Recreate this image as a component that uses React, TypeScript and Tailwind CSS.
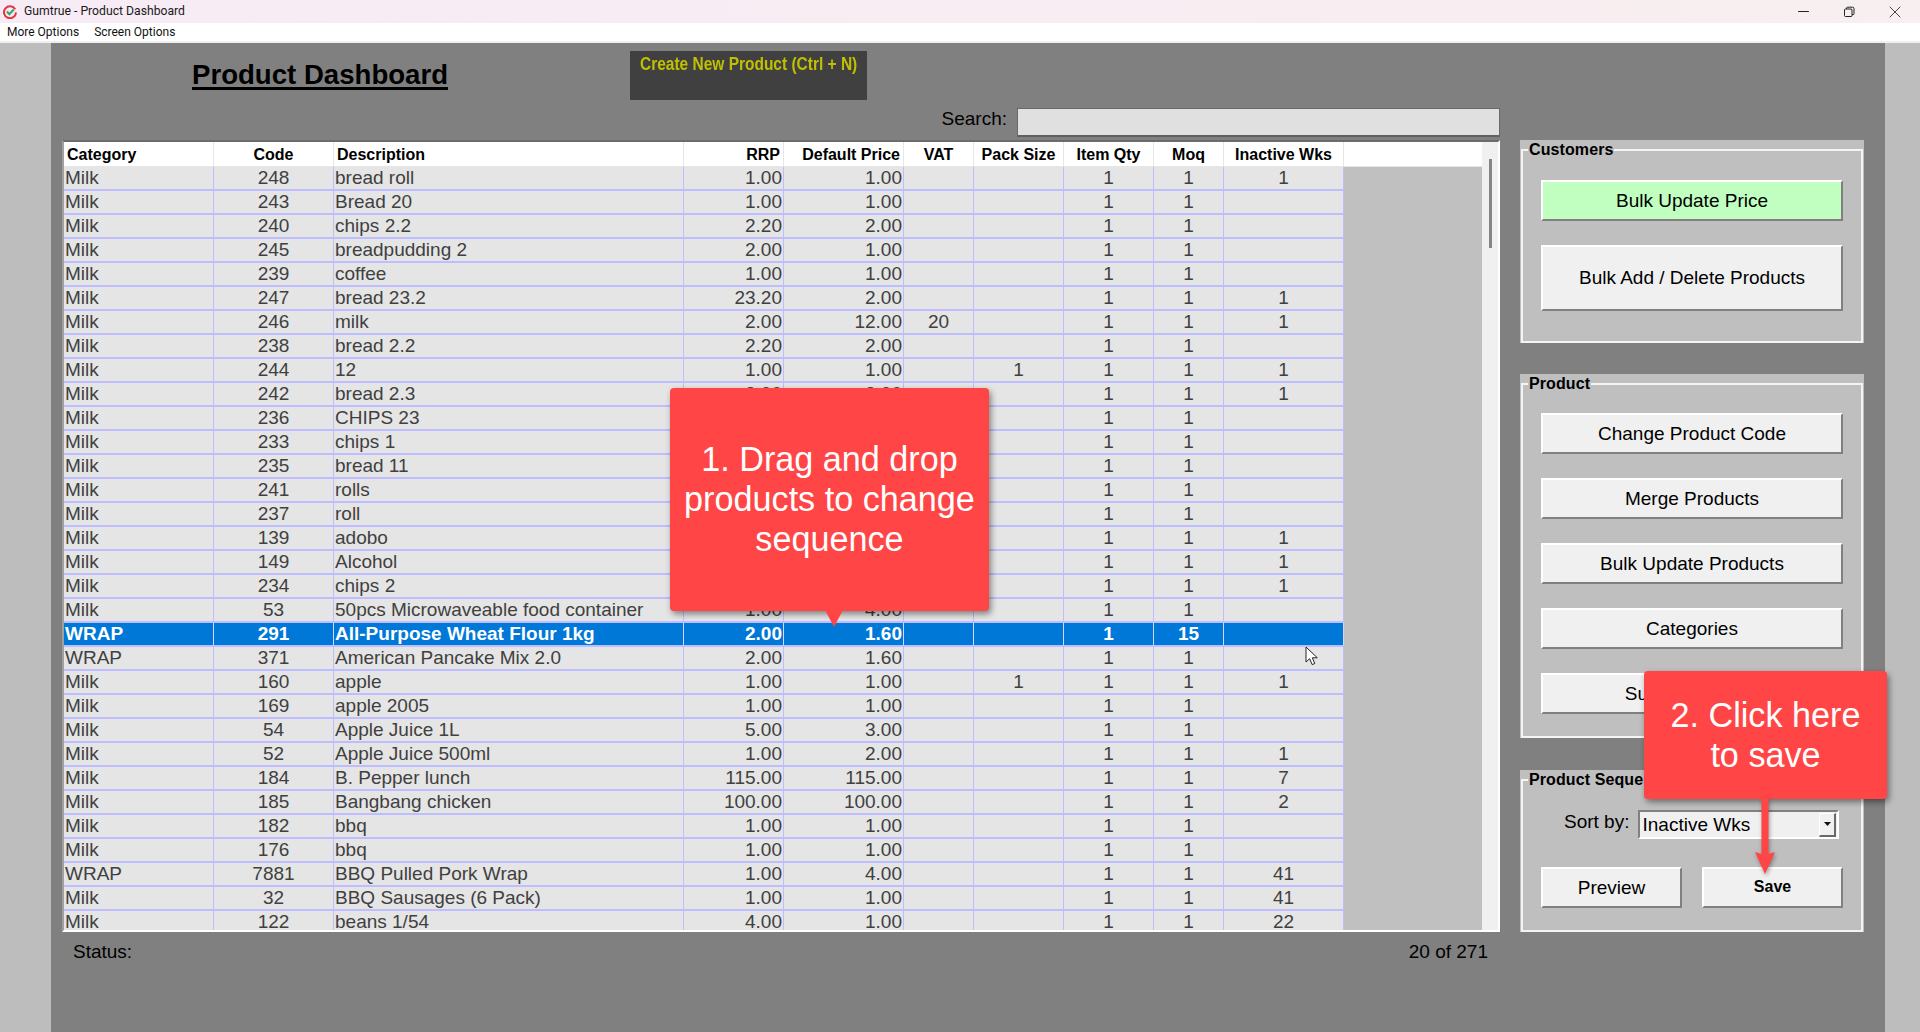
import { Minus, X } from "lucide-react";

type Row = [string, string, string, string, string, string, string, string, string, string];

const rows: Row[] = [
  ["Milk", "248", "bread roll", "1.00", "1.00", "", "", "1", "1", "1"],
  ["Milk", "243", "Bread 20", "1.00", "1.00", "", "", "1", "1", ""],
  ["Milk", "240", "chips 2.2", "2.20", "2.00", "", "", "1", "1", ""],
  ["Milk", "245", "breadpudding 2", "2.00", "1.00", "", "", "1", "1", ""],
  ["Milk", "239", "coffee", "1.00", "1.00", "", "", "1", "1", ""],
  ["Milk", "247", "bread 23.2", "23.20", "2.00", "", "", "1", "1", "1"],
  ["Milk", "246", "milk", "2.00", "12.00", "20", "", "1", "1", "1"],
  ["Milk", "238", "bread 2.2", "2.20", "2.00", "", "", "1", "1", ""],
  ["Milk", "244", "12", "1.00", "1.00", "", "1", "1", "1", "1"],
  ["Milk", "242", "bread 2.3", "2.00", "2.00", "", "", "1", "1", "1"],
  ["Milk", "236", "CHIPS 23", "", "", "", "", "1", "1", ""],
  ["Milk", "233", "chips 1", "", "", "", "", "1", "1", ""],
  ["Milk", "235", "bread 11", "", "", "", "", "1", "1", ""],
  ["Milk", "241", "rolls", "", "", "", "", "1", "1", ""],
  ["Milk", "237", "roll", "", "", "", "", "1", "1", ""],
  ["Milk", "139", "adobo", "", "", "", "", "1", "1", "1"],
  ["Milk", "149", "Alcohol", "", "", "", "", "1", "1", "1"],
  ["Milk", "234", "chips 2", "", "", "", "", "1", "1", "1"],
  ["Milk", "53", "50pcs Microwaveable food container", "1.00", "4.00", "", "", "1", "1", ""],
  ["WRAP", "291", "All-Purpose Wheat Flour 1kg", "2.00", "1.60", "", "", "1", "15", ""],
  ["WRAP", "371", "American Pancake Mix 2.0", "2.00", "1.60", "", "", "1", "1", ""],
  ["Milk", "160", "apple", "1.00", "1.00", "", "1", "1", "1", "1"],
  ["Milk", "169", "apple 2005", "1.00", "1.00", "", "", "1", "1", ""],
  ["Milk", "54", "Apple Juice 1L", "5.00", "3.00", "", "", "1", "1", ""],
  ["Milk", "52", "Apple Juice 500ml", "1.00", "2.00", "", "", "1", "1", "1"],
  ["Milk", "184", "B. Pepper lunch", "115.00", "115.00", "", "", "1", "1", "7"],
  ["Milk", "185", "Bangbang chicken", "100.00", "100.00", "", "", "1", "1", "2"],
  ["Milk", "182", "bbq", "1.00", "1.00", "", "", "1", "1", ""],
  ["Milk", "176", "bbq", "1.00", "1.00", "", "", "1", "1", ""],
  ["WRAP", "7881", "BBQ Pulled Pork Wrap", "1.00", "4.00", "", "", "1", "1", "41"],
  ["Milk", "32", "BBQ Sausages (6 Pack)", "1.00", "1.00", "", "", "1", "1", "41"],
  ["Milk", "122", "beans 1/54", "4.00", "1.00", "", "", "1", "1", "22"],
];

const headers = ["Category", "Code", "Description", "RRP", "Default Price", "VAT", "Pack Size", "Item Qty", "Moq", "Inactive Wks"];

const colWidths = ["w-[150px]", "w-[120px]", "w-[350px]", "w-[100px]", "w-[120px]", "w-[70px]", "w-[90px]", "w-[90px]", "w-[70px]", "w-[120px]"];

const headAlign = ["pl-[3px] text-left", "text-center", "pl-[3px] text-left", "pr-[3px] text-right", "pr-[3px] text-right", "text-center", "text-center", "text-center", "text-center", "text-center"];

const cellAlign = ["pl-[1px] text-left", "text-center", "pl-[1px] text-left", "pr-[1px] text-right", "pr-[1px] text-right", "text-center", "text-center", "text-center", "text-center", "text-center"];

const WinButton = ({ label, className = "" }: { label: string; className?: string }) => (
  <button className={`h-[41px] w-[302px] border-t-2 border-l-2 border-r-2 border-b-2 border-t-white border-l-white border-r-[#808080] border-b-[#808080] bg-[#f0f0f0] pt-[2px] text-[19px] text-black ${className}`}>
    {label}
  </button>
);

const GroupBox = ({ title, className, children }: { title: string; className: string; children: React.ReactNode }) => (
  <div className={`w-[344px] bg-[#bfbfbf] px-[1px] pt-[1px] ${className}`}>
    <fieldset className="h-full border-2 border-[#f4f4f4]">
      <legend className="ml-[5px] px-[1px] text-[16px] leading-[18px] font-bold tracking-[0.1px] text-black">{title}</legend>
      {children}
    </fieldset>
  </div>
);

export default function App() {
  return (
    <div className="relative flex h-[1032px] w-[1920px] flex-col overflow-hidden font-['Liberation_Sans',Arial,sans-serif]">
      {/* Title bar */}
      <div className="flex h-[23px] shrink-0 items-center bg-linear-to-r from-[#f7ebf5] to-[#f8eff0] pl-[3px]">
        <svg width="14" height="14" viewBox="0 0 14 14" fill="none">
          <path d="M12.2 4.2A6 6 0 1 0 13 7.4" stroke="#e8343c" strokeWidth="2" />
          <path d="M3.9 6.6l2.5 2.6 4.3-4.6" stroke="#3aa66a" strokeWidth="2.2" />
        </svg>
        <span className="ml-[7px] font-['Roboto',sans-serif] text-[12.2px] text-[#1a1a1a]">Gumtrue - Product Dashboard</span>
        <div className="ml-auto flex items-center text-[#222]">
          <Minus size={17} strokeWidth={1.5} className="mr-[31px]" />
          <svg width="12" height="12" viewBox="0 0 12 12" fill="none" stroke="#222" strokeWidth="1" className="mr-[30px]">
            <rect x="1.5" y="3" width="7.5" height="7.5" rx="1" />
            <path d="M3.5 3V2.2a1 1 0 0 1 1-1h5a1.5 1.5 0 0 1 1.5 1.5v5a1 1 0 0 1-1 1H9" />
          </svg>
          <X size={20} strokeWidth={1} className="mr-[15px]" />
        </div>
      </div>

      {/* Menu */}
      <div className="flex h-[18px] shrink-0 items-center gap-[15px] bg-white pl-[7px] font-['Roboto',sans-serif] text-[12px] text-[#111]">
        <span>More Options</span>
        <span>Screen Options</span>
      </div>
      <div className="h-[2px] shrink-0 bg-[#f0f0f0]" />

      <div className="flex flex-1 bg-[#bdbdbd]">
        <div className="ml-[51px] flex w-[1834px] gap-[20px] bg-[#808080] pl-[11px]">
          {/* Left column */}
          <div className="flex w-[1438px] flex-col">
            <div className="flex h-[97px]">
              <div className="w-[568px] pt-[17px] pl-[130px]">
                <h1 className="text-[27.6px] leading-[30px] font-bold text-black underline decoration-[3px] underline-offset-[3px]">Product Dashboard</h1>
              </div>
              <div className="mt-[8px] h-[49px] w-[237px] bg-[#404040] pt-[2px] pl-[10px] text-[18.67px] leading-[22px] font-bold text-[#c0c000]">
                <span className="inline-block origin-left scale-x-[0.83] whitespace-nowrap">Create New Product (Ctrl + N)</span>
              </div>
              <div className="flex flex-1 justify-end pt-[65px]">
                <div className="flex h-[29px] items-center gap-[10px]">
                  <span className="mb-[6px] text-[19px] text-black">Search:</span>
                  <div className="h-[29px] w-[483px] border-t border-l border-b-2 border-r border-t-[#696969] border-l-[#696969] border-b-[#606060] border-r-[#696969] bg-[#e0e0e0]" />
                </div>
              </div>
            </div>

            {/* Grid */}
            <div className="flex h-[792px] flex-col overflow-hidden border-t-2 border-l-2 border-b-2 border-r-2 border-t-[#6b6b6b] border-l-[#a0a0a0] border-b-white border-r-white bg-[#f0f0f0]">
              <div className="flex h-[25px] w-[1418px] shrink-0 border-b border-[#e6e6e6] bg-white">
                {headers.map((h, i) => (
                  <div key={h} className={`${colWidths[i]} ${headAlign[i]} shrink-0 whitespace-nowrap border-r border-[#e6e6e6] text-[16px] leading-[26px] font-bold text-black`}>
                    {h}
                  </div>
                ))}
              </div>
              <div className="flex min-h-0 flex-1">
                <div className="w-[1280px] shrink-0 overflow-hidden">
                  {rows.map((row) => {
                    const selected = row[1] === "291";
                    return (
                      <div key={row[1]} className={`flex h-[24px] border-b-2 border-[#bdbdff] ${selected ? "bg-[#0078d7]" : "bg-[#e5e5e5]"}`}>
                        {row.map((value, i) => (
                          <div
                            key={i}
                            className={`${colWidths[i]} ${cellAlign[i]} shrink-0 whitespace-nowrap border-r text-[19px] leading-[22px] ${selected ? "border-[#d6d6ff] font-bold text-white" : "border-[#bdbdff] text-[#404040]"}`}
                          >
                            {value}
                          </div>
                        ))}
                      </div>
                    );
                  })}
                </div>
                <div className="w-[138px] shrink-0 bg-[#c0c0c0]" />
                <div className="ml-[1px] flex-1 bg-[#f0f0f0] pl-[6px]">
                  <div className="-mt-[8px] h-[89px] w-[3px] bg-[#858585]" />
                </div>
              </div>
            </div>

            <div className="flex justify-between pt-[9px] pr-[12px] pl-[11px] text-[19px] leading-[22px] text-black">
              <span>Status:</span>
              <span>20 of 271</span>
            </div>
          </div>

          {/* Right column */}
          <div className="flex flex-col pt-[97px]">
            <GroupBox title="Customers" className="h-[203px]">
              <div className="flex flex-col gap-[24px] pt-[21px] pl-[18px]">
                <WinButton label="Bulk Update Price" className="!bg-[#c0ffc0]" />
                <WinButton label="Bulk Add / Delete Products" className="!h-[66px] !pt-0" />
              </div>
            </GroupBox>

            <GroupBox title="Product" className="mt-[31px] h-[364px]">
              <div className="flex flex-col gap-[24px] pt-[20px] pl-[18px]">
                <WinButton label="Change Product Code" />
                <WinButton label="Merge Products" />
                <WinButton label="Bulk Update Products" />
                <WinButton label="Categories" />
                <WinButton label="Su" className="pr-[193px] text-right" />
              </div>
            </GroupBox>

            <GroupBox title="Product Sequence" className="mt-[32px] h-[162px]">
              <div className="flex items-center pt-[21px] pl-[41px]">
                <span className="mb-[6px] text-[19px] leading-[22px] text-black">Sort by:</span>
                <div className="ml-[9px] flex h-[29px] w-[201px] items-center justify-between border-t-2 border-l-2 border-b-2 border-r-2 border-t-[#808080] border-l-[#808080] border-b-white border-r-white bg-[#f0f0f0] pr-[1px] pl-[2px] text-[19px] text-black">
                  <span className="pt-[2px]">Inactive Wks</span>
                  <div className="flex h-[24px] w-[17px] items-center justify-center border-t border-l border-b-2 border-r-2 border-t-white border-l-white border-b-[#696969] border-r-[#696969] bg-[#f0f0f0]">
                    <svg width="7" height="4" viewBox="0 0 7 4">
                      <path d="M0 0h7L3.5 4z" fill="#111" />
                    </svg>
                  </div>
                </div>
              </div>
              <div className="flex gap-[20px] pt-[28px] pl-[18px]">
                <WinButton label="Preview" className="!w-[141px]" />
                <WinButton label="Save" className="!w-[141px] !pt-0 !pb-[1px] !text-[16px] font-bold" />
              </div>
            </GroupBox>
          </div>
        </div>
      </div>

      {/* Callout 1 */}
      <div className="absolute top-[388px] left-[670px] flex h-[223px] w-[319px] items-center justify-center rounded-[4px] bg-[#ff4545] pb-[2px] text-center text-[34.2px] leading-[40px] text-white shadow-[2px_3px_6px_rgba(0,0,0,0.45)]">
        <span>
          1. Drag and drop
          <br />
          products to change
          <br />
          sequence
        </span>
        <svg width="18" height="18" viewBox="0 0 18 18" className="absolute top-[222px] left-[155px]">
          <path d="M0 0h18L9 17z" fill="#ff4545" />
        </svg>
      </div>

      {/* Callout 2 */}
      <div className="absolute top-[671px] left-[1644px] flex h-[128px] w-[243px] items-center justify-center rounded-[4px] bg-[#ff4545] text-center text-[34.2px] leading-[40px] text-white shadow-[2px_3px_6px_rgba(0,0,0,0.45)]">
        <span>
          2. Click here
          <br />
          to save
        </span>
        <svg width="24" height="76" viewBox="0 0 24 76" className="absolute top-[127px] left-[109px] drop-shadow-[1px_2px_2px_rgba(0,0,0,0.35)]">
          <path d="M8.5 0h7v56l6.5-2-10 22L2 54l6.5 2z" fill="#ff4545" />
        </svg>
      </div>

      {/* Mouse pointer */}
      <svg width="14" height="20" viewBox="0 0 14 20" className="absolute top-[646px] left-[1305px]">
        <path d="M1 1v15l3.6-3.3L7.2 18.6l2.6-1.1-2.5-5.7h5z" fill="#fff" stroke="#222" strokeWidth="1" />
      </svg>
    </div>
  );
}
